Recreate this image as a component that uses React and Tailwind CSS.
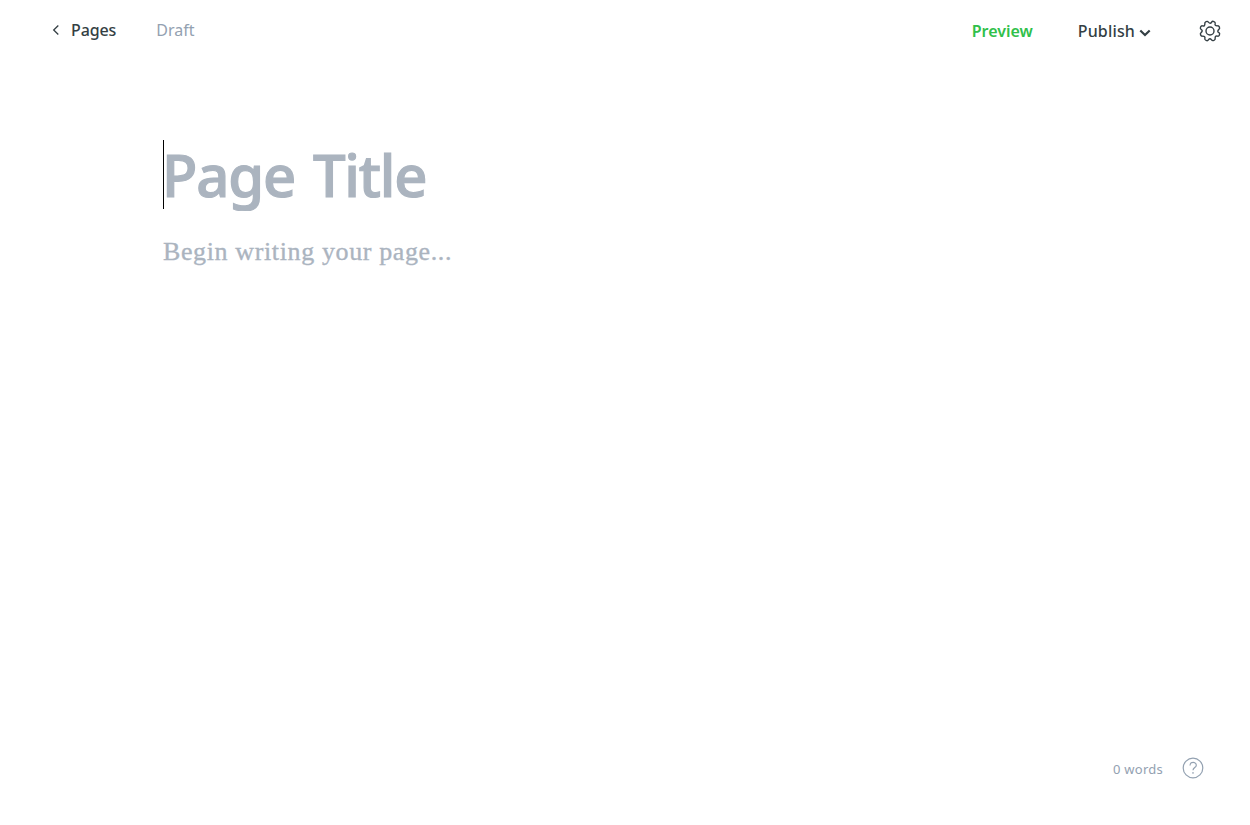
import React from "react";

function Gear() {
  return (
    <svg className="h-[22px] w-[22px]" viewBox="-11 -11 22 22" fill="none" stroke="#343f44" strokeWidth="1.4" strokeLinejoin="round">
      <circle r="4" />
      <path transform="rotate(22.5)" d="M-1.9 -8.9Q-1.7 -10.2 0 -10.2Q1.7 -10.2 1.9 -8.9Q2.2 -6.3 4.9 -7.6Q5.9 -8.4 7.2 -7.2Q8.4 -5.9 7.6 -4.9Q6.3 -2.2 8.9 -1.9Q10.2 -1.7 10.2 0Q10.2 1.7 8.9 1.9Q6.3 2.2 7.6 4.9Q8.4 5.9 7.2 7.2Q5.9 8.4 4.9 7.6Q2.2 6.3 1.9 8.9Q1.7 10.2 0 10.2Q-1.7 10.2 -1.9 8.9Q-2.2 6.3 -4.9 7.6Q-5.9 8.4 -7.2 7.2Q-8.4 5.9 -7.6 4.9Q-6.3 2.2 -8.9 1.9Q-10.2 1.7 -10.2 0Q-10.2 -1.7 -8.9 -1.9Q-6.3 -2.2 -7.6 -4.9Q-8.4 -5.9 -7.2 -7.2Q-5.9 -8.4 -4.9 -7.6Q-2.2 -6.3 -1.9 -8.9Z" />
    </svg>
  );
}

export default function App() {
  return (
    <div className="flex h-[825px] w-[1250px] flex-col bg-white font-['Noto_Sans',sans-serif] text-[16px] leading-6 text-[#343f44]">
      <header className="flex h-[62px] items-center pl-[52px] pr-[29px]">
        <div className="flex items-center pb-[2px]">
          <button className="flex items-center font-medium tracking-[-0.1px]">
            <svg className="mr-[11px] h-[10px] w-[8px]" viewBox="0 0 8 10" fill="none" stroke="#343f44" strokeWidth="1.3"><path d="M6.3 .5L1.7 5L6.3 9.5" /></svg>
            Pages
          </button>
          <span className="ml-10 text-[#93a1b1]">Draft</span>
        </div>
        <div className="ml-auto flex items-center">
          <button className="font-semibold text-[#30c04a]">Preview</button>
          <button className="ml-[45px] flex items-center font-medium">
            <span className="tracking-[0.15px]">Publish</span>
            <svg className="ml-[4px] mt-[4px] h-[8px] w-[12px]" viewBox="0 0 12 8" fill="none" stroke="#343f44" strokeWidth="2.2"><path d="M1.3 1.5L6 6L10.7 1.5" /></svg>
          </button>
          <button className="ml-12" aria-label="Settings"><Gear /></button>
        </div>
      </header>
      <main className="flex-1 pl-[163px] pt-[77px]">
        <h1 className="flex h-[72px] overflow-hidden whitespace-nowrap text-[58px] font-medium leading-[72px] tracking-[-1.2px] text-[#abb4bf] [word-spacing:4px] [-webkit-text-stroke:1.2px_#abb4bf]">
          <span className="mt-px mr-[-2px] h-[69px] w-px bg-black" />
          Page Title
        </h1>
        <p className="mt-[25px] whitespace-nowrap font-['Liberation_Serif',serif] text-[26px] leading-8 tracking-[0.62px] text-[#abb4bf] [-webkit-text-stroke:0.35px_#abb4bf]">Begin writing your page...</p>
      </main>
      <footer className="flex h-[68px] items-start justify-end pr-[46px] text-[13px] leading-[24px] text-[#93a1b1]">
        <span className="mr-[19px] tracking-[0.25px]">0 words</span>
        <svg className="h-[22px] w-[22px]" viewBox="0 0 22 22" fill="none" stroke="#93a1b1" strokeWidth="1.2">
          <circle cx="11" cy="11" r="9.8" />
          <path d="M8 8.5C8 4.4 14.3 4.6 14.3 8.2C14.3 10.5 11 10.7 11 13.3" /><circle cx="11" cy="15.8" r=".3" />
        </svg>
      </footer>
    </div>
  );
}
